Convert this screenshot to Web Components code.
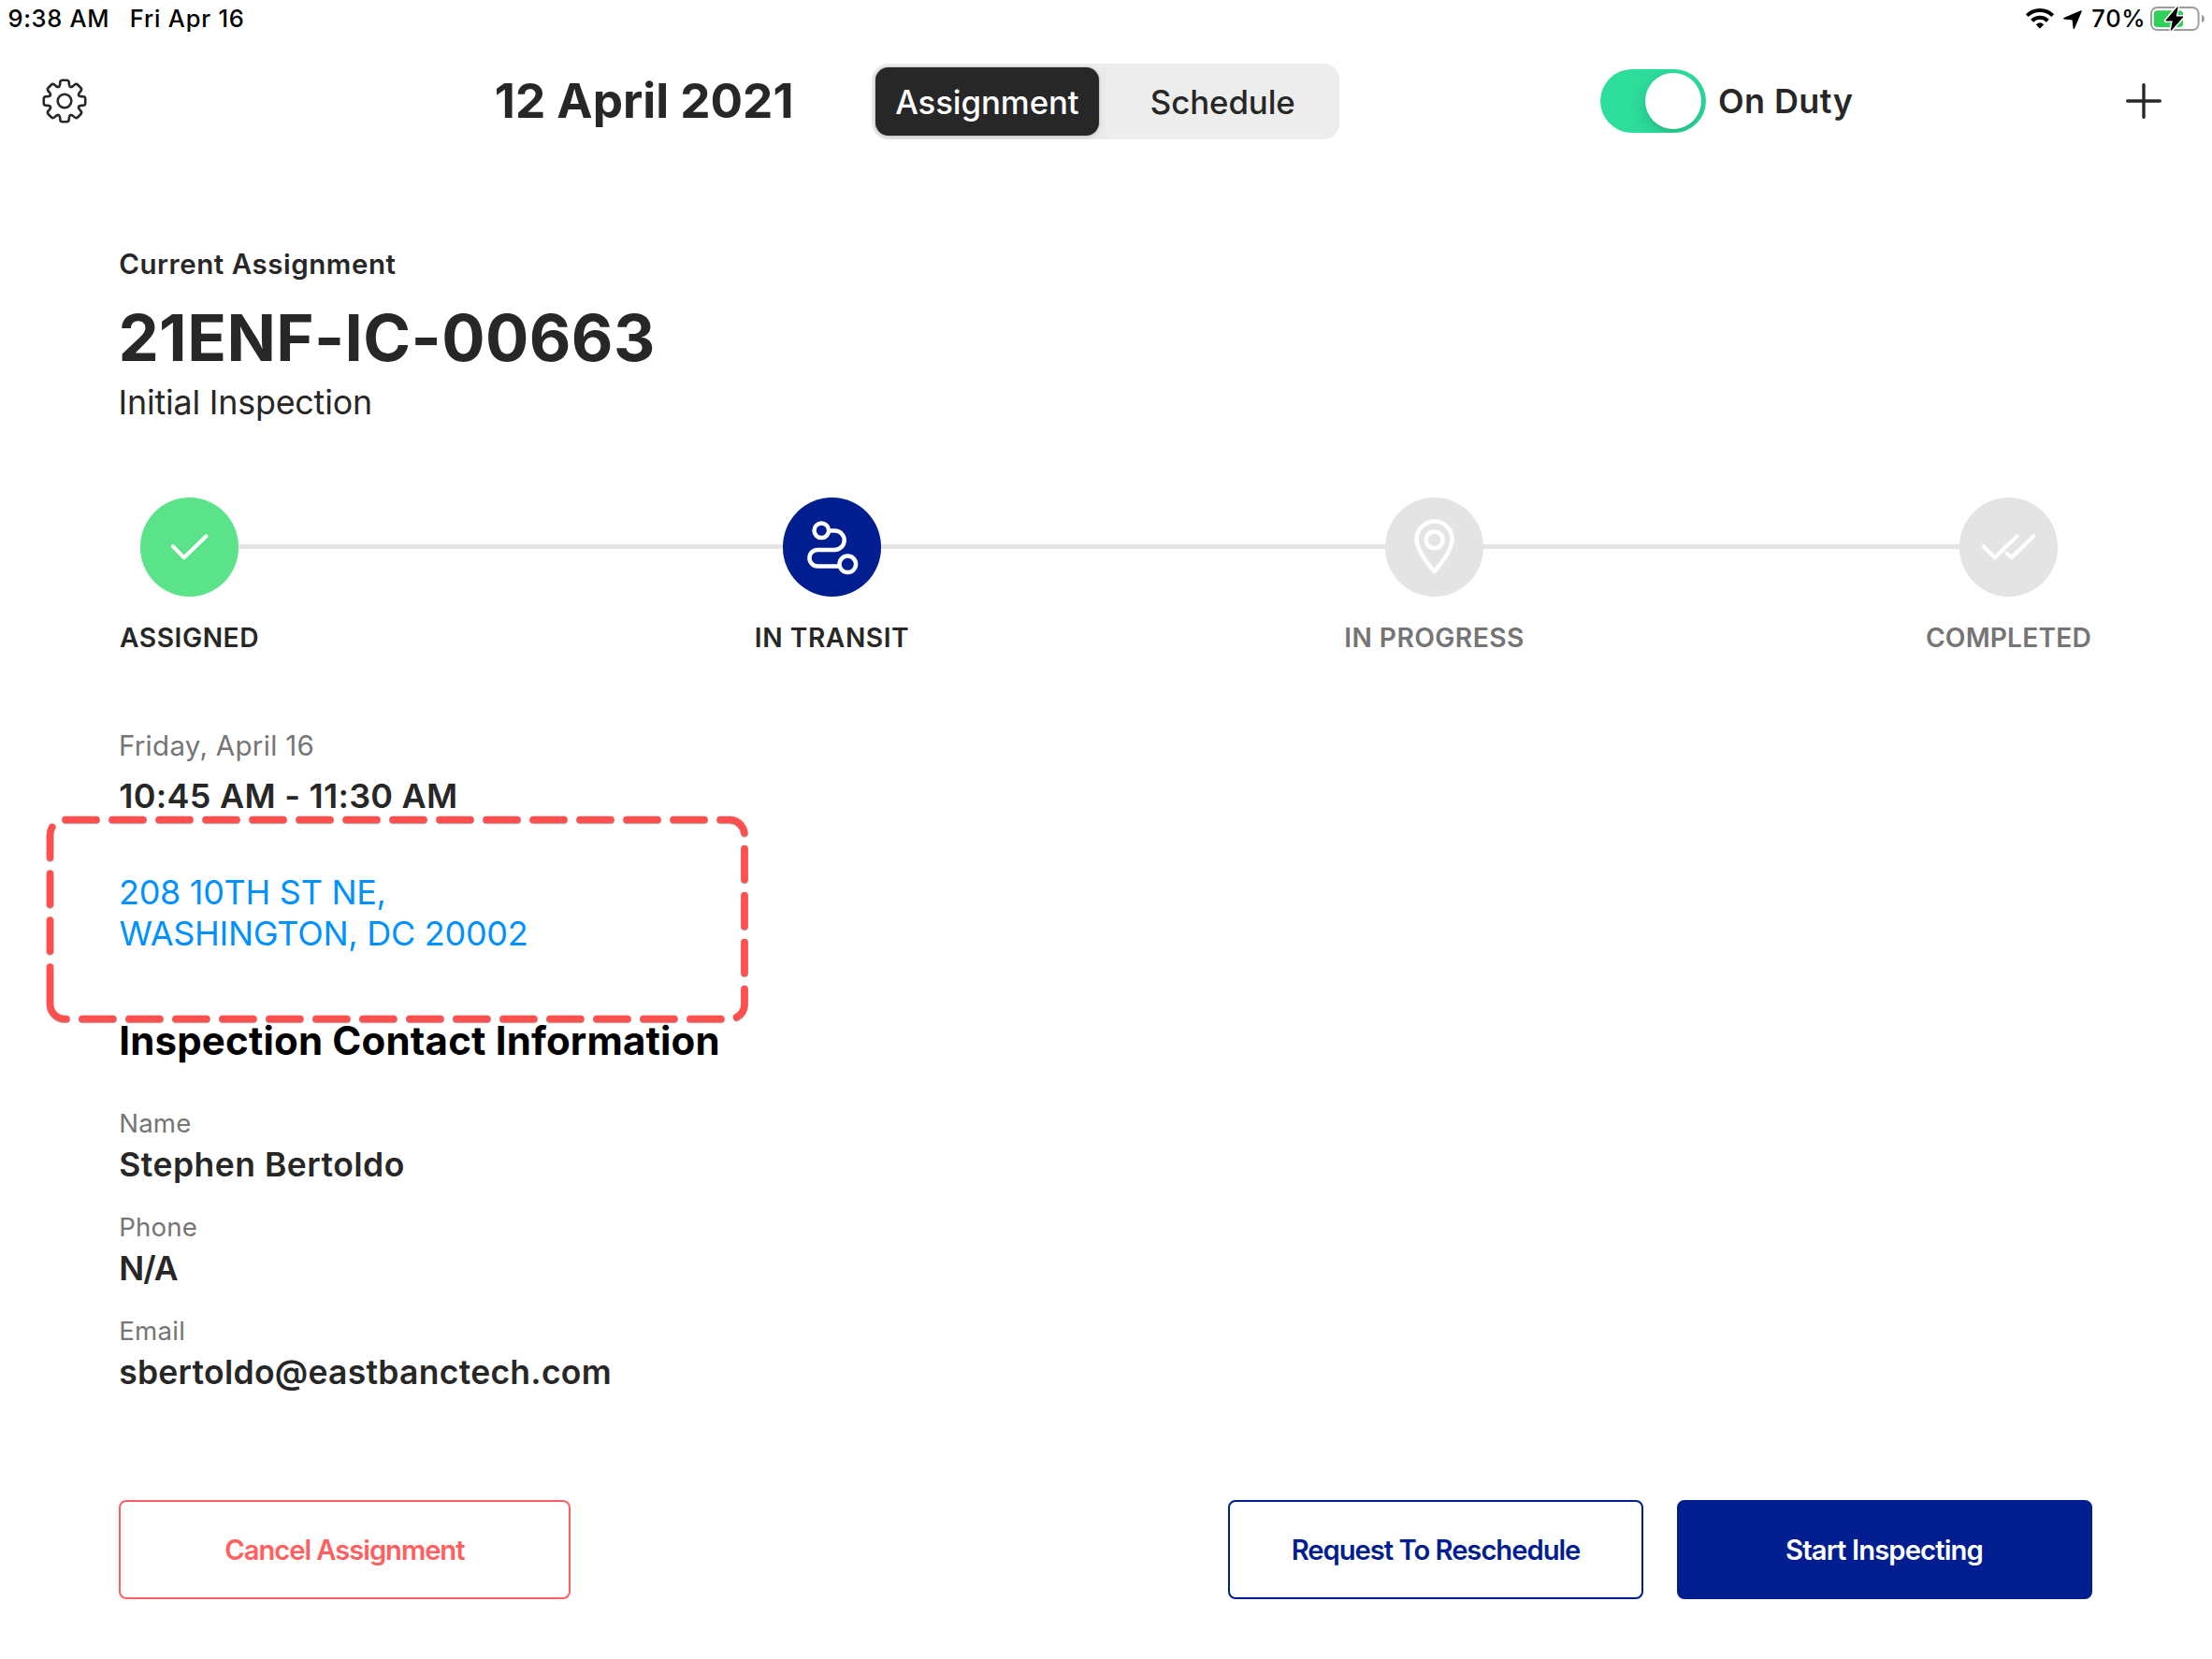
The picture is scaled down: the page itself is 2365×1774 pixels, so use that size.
<!DOCTYPE html>
<html lang="en">
<head>
<meta charset="utf-8">
<title>Current Assignment</title>
<style>
  html, body { margin: 0; padding: 0; background: #fff; }
  body { width: 2365px; height: 1774px; overflow: hidden; font-family: Inter, "Noto Sans", sans-serif; color: #272727; }
</style>
</head>
<body>
<inspector-app></inspector-app>
<script>
const define = (name, html, setup) => {
  const template = document.createElement('template');
  template.innerHTML = html;
  customElements.define(name, class extends HTMLElement {
    constructor() {
      super();
      this.attachShadow({ mode: 'open' }).appendChild(template.content.cloneNode(true));
    }
    connectedCallback() { if (setup) setup(this, this.shadowRoot); }
  });
};

/* One line of type: size, weight, line height and tracking come from attributes. */
define('type-line', `
  <style>:host { display: block; white-space: nowrap; }</style><slot></slot>`,
  el => {
    const [size, weight, line, tracking] = el.getAttribute('spec').split(' ');
    Object.assign(el.style, { fontSize: size + 'px', fontWeight: weight, lineHeight: line + 'px', letterSpacing: tracking + 'px' });
  });

define('status-bar', `
  <style>
    :host { display: flex; align-items: center; justify-content: space-between; height: 39px; padding: 0 8px 0 8.4px; color: #000; box-sizing: border-box; }
    .side { display: flex; align-items: center; }
    svg { display: block; overflow: visible; }
  </style>
  <div class="side">
    <type-line spec="25.5 500 39 0.7">9:38 AM</type-line>
    <type-line spec="25.5 500 39 0.8" style="margin-left:21.5px">Fri Apr 16</type-line>
  </div>
  <div class="side">
    <svg width="30" height="23" viewBox="0 0 30 23" style="margin-right:10px">
      <g fill="none" stroke="#000" stroke-width="4.1"><path d="M1.3 8.6A19.6 19.6 0 0 1 28.7 8.6"/><path d="M6.6 14.2A12 12 0 0 1 23.4 14.2"/></g>
      <path d="M10.9 18.3Q15 14.3 19.1 18.3L15.7 21.9Q15 22.6 14.3 21.9Z"/>
    </svg>
    <svg width="20" height="20" viewBox="0 0 20 20" style="margin:3px 10.4px 0 0"><path d="M19 .9L.9 8.7L10.3 9.7L11.3 19.1Z" stroke="#000" stroke-width="1.6" stroke-linejoin="round"/></svg>
    <type-line spec="25.5 500 39 0.7">70%</type-line>
    <svg width="58" height="26" viewBox="0 0 58 26" style="margin:1px 0 0 4.6px">
      <rect x="1" y="1" width="50.6" height="24" rx="6.6" fill="none" stroke="#9b9b9b" stroke-width="1.9"/>
      <path d="M55 8.7Q58 10.2 58 13.1T55 17.5Z" fill="#9b9b9b"/>
      <path d="M7.5 4.2H31Q35 4.2 35 8V18.2Q35 22 31 22H7.5Q3.8 22 3.8 18.2V8Q3.8 4.2 7.5 4.2Z" fill="#30d158"/>
      <path d="M29.2 .6L16.8 15H24.4L22.3 25.4L35 11H27.2Z" fill="#fff" stroke="#fff" stroke-width="4" stroke-linejoin="round"/>
      <path d="M29.2 .6L16.8 15H24.4L22.3 25.4L35 11H27.2Z" fill="#000" stroke="#000" stroke-width="1" stroke-linejoin="round"/>
    </svg>
  </div>`);

define('gear-icon', `
  <style>:host { display: block; } svg { display: block; overflow: visible; }</style>
  <svg width="48" height="50" viewBox="-24 -25 48 50" fill="none" stroke="#282828" stroke-width="2.6" stroke-linejoin="round"><path/><circle r="7.3"/></svg>`,
  (el, root) => {
    /* Eight teeth, each a trapezoid whose corners are rounded with quadratic curves. */
    const pts = [];
    for (let k = 0; k < 8; k++)
      for (const [r, a, c] of [[16.4, -18, 1.9], [22.7, -11.5, 2.4], [22.7, 11.5, 2.4], [16.4, 18, 1.9]]) {
        const t = (k * 45 + a) * Math.PI / 180;
        pts.push([r * Math.sin(t), -r * Math.cos(t), c]);
      }
    const toward = (p, q, d) => { const l = Math.hypot(q[0] - p[0], q[1] - p[1]); return [p[0] + (q[0] - p[0]) * d / l, p[1] + (q[1] - p[1]) * d / l].map(v => v.toFixed(2)).join(' '); };
    const n = pts.length;
    root.querySelector('path').setAttribute('d', pts.map((p, i) =>
      (i ? 'L' : 'M') + toward(p, pts[(i + n - 1) % n], p[2]) + 'Q' + p[0].toFixed(2) + ' ' + p[1].toFixed(2) + ' ' + toward(p, pts[(i + 1) % n], p[2])).join('') + 'Z');
  });

define('segmented-control', `
  <style>
    :host { display: flex; width: 500px; height: 81px; box-sizing: border-box; padding: 4.4px 3.6px; border-radius: 17px; background: #ededed; align-items: stretch; overflow: hidden; }
    .seg { display: flex; align-items: center; justify-content: center; }
    .on { width: 239.6px; border-radius: 14px; background: #272727; color: #fff; box-shadow: 0 3px 9px rgba(0,0,0,.1), 0 0 2px rgba(0,0,0,.35); }
    .off { flex: 1; color: #272727; padding-left: 5px; }
    .rule { width: 1px; margin: -4.4px 0 -4.4px 5px; background: #e6e6e6; }
  </style>
  <div class="seg on"><slot name="on"></slot></div><div class="rule"></div><div class="seg off"><slot name="off"></slot></div>`);

define('duty-toggle', `
  <style>
    :host { display: flex; align-items: center; }
    .track { display: flex; align-items: center; justify-content: flex-end; width: 112.8px; height: 68.6px; box-sizing: border-box; padding: 4.4px; border-radius: 34.3px; background: #2cdd9b; overflow: hidden; }
    .knob { width: 60px; height: 60px; border-radius: 50%; background: #fff; box-shadow: 0 6px 17px rgba(0,0,0,.15), 0 2px 3px rgba(0,0,0,.06); }
    ::slotted(*) { margin: 0 0 0 13.2px; }
  </style>
  <div class="track"><div class="knob"></div></div><slot></slot>`);

define('top-bar', `
  <style>
    :host { display: flex; align-items: center; height: 138px; box-sizing: border-box; padding: 0 54px 0 45.2px; }
    .title { margin: 0 0 1.6px 435.6px; width: 403.2px; }
    segmented-control { margin-top: 1px; }
    duty-toggle { margin-left: 279px; }
    .plus { display: block; margin-left: auto; }
  </style>
  <gear-icon></gear-icon>
  <type-line class="title" spec="51.3 650 60 0">12 April 2021</type-line>
  <segmented-control>
    <type-line slot="on" spec="34.8 550 44 -0.1">Assignment</type-line>
    <type-line slot="off" spec="34.8 540 44 -0.1">Schedule</type-line>
  </segmented-control>
  <duty-toggle><type-line spec="36 640 44 0.4">On Duty</type-line></duty-toggle>
  <svg class="plus" width="38" height="38" viewBox="-19 -19 38 38" stroke="#282828" stroke-width="3.4" stroke-linecap="round"><path d="M-17.3 0H17.3M0 -17.3V17.3"/></svg>`);

const STEP_ICONS = {
  check: '<path d="M34.9 52.2L46.7 64.3L70.6 41.3" stroke-width="4"/>',
  route: '<circle cx="41.3" cy="35.3" r="7.8"/><path d="M50 35.5H55.5A10.2 10.2 0 0 1 55.5 55.9H37.2A8.75 8.75 0 0 0 37.2 73.4H60"/><circle cx="69.3" cy="71.3" r="8.8"/>',
  pin: '<path d="M52.6 79.2C47 72.5 33.6 57.5 33.6 44.6A19 19 0 0 1 71.6 44.6C71.6 57.5 58.2 72.5 52.6 79.2Z"/><circle cx="52.6" cy="45.4" r="8.9"/>',
  double: '<path d="M25.9 52.2L37.7 64.3L61.6 41.3M50.6 59.5L55.6 64.3L79.4 41.3" stroke-width="4"/>'
};
define('progress-step', `
  <style>
    :host { display: flex; flex-direction: column; align-items: center; width: 105.2px; flex: none; color: #272727; }
    :host([tone="todo"]) { color: #757575; }
    .dot { position: relative; width: 105.2px; height: 105.2px; border-radius: 50%; background: #e4e4e4; margin-bottom: 27.8px; }
    :host([tone="done"]) .dot { background: #5ae389; }
    :host([tone="now"]) .dot { background: #001e90; }
    svg { display: block; }
  </style>
  <div class="dot"><svg width="105.2" height="105.2" viewBox="0 0 105.2 105.2" fill="none" stroke="#fff" stroke-width="4.5" stroke-linecap="round" stroke-linejoin="round"></svg></div>
  <slot></slot>`,
  (el, root) => { root.querySelector('svg').innerHTML = STEP_ICONS[el.getAttribute('icon')]; });

define('step-link', `<style>:host { display: block; height: 4.7px; margin: 50.1px -1px 0; background: #e4e4e4; }</style>`,
  el => { el.style.flex = el.getAttribute('span') + ' 0 0'; });

define('progress-track', `<style>:host { display: flex; align-items: flex-start; height: 166.2px; margin: 80.2px 165px 0 150px; }</style><slot></slot>`);

define('address-callout', `
  <style>
    :host { display: block; position: relative; margin: 60px 0 67.6px 127px; width: 680px; color: #0091ff; }
    svg { position: absolute; left: -127px; top: -72.9px; overflow: visible; filter: drop-shadow(.6px 1px .6px rgba(0,0,0,.3)); }
  </style>
  <slot></slot>
  <svg width="810" height="250" viewBox="0 860 810 250" fill="none" stroke="#ff4f4f" stroke-width="7.6" stroke-linecap="round">
    <path stroke-dasharray="33 17" d="M53.5 1067V892.5A16 16 0 0 1 69.5 876.5H780A16 16 0 0 1 796 892.5V1073.5A16 16 0 0 1 780 1089.5H69.5A16 16 0 0 1 53.5 1073.5V1067"/>
  </svg>`);

define('contact-field', `
  <style>:host { display: block; margin-left: 127.2px; height: 111px; } .label { color: #757575; margin-bottom: 6.2px; }</style>
  <div class="label"><slot name="label"></slot></div><slot></slot>`);

define('action-button', `
  <style>
    :host { display: flex; align-items: center; justify-content: center; height: 106px; width: 444px; box-sizing: border-box; border: 2px solid #001e90; border-radius: 8px; color: #001e90; background: #fff; }
    :host([kind="primary"]) { background: #001e90; color: #fff; }
    :host([kind="danger"]) { border-color: #ff5f5f; color: #ff5f5f; width: 483.4px; }
    ::slotted(*) { margin-top: 1px; }
  </style><slot></slot>`);

define('action-bar', `
  <style>:host { display: flex; margin: auto 128.5px 63.7px 126.7px; gap: 35.5px; } .push { flex: 1; }</style>
  <slot name="start"></slot><div class="push"></div><slot></slot>`);

define('inspector-app', `
  <style>:host { display: flex; flex-direction: column; width: 2365px; height: 1774px; background: #fff; } .muted { color: #757575; } .black { color: #000; }</style>
  <status-bar></status-bar>
  <top-bar></top-bar>
  <type-line spec="29.5 600 40 0.54" style="margin:85.2px 0 0 127.2px">Current Assignment</type-line>
  <type-line spec="68.8 700 80 0.4" style="margin:18.6px 0 0 126.4px">21ENF-IC-00663</type-line>
  <type-line spec="35.8 400 44 -0.18" style="margin:7.4px 0 0 126.6px">Initial Inspection</type-line>
  <progress-track>
    <progress-step tone="done" icon="check"><type-line spec="28.2 640 34 0.55">ASSIGNED</type-line></progress-step>
    <step-link span="584"></step-link>
    <progress-step tone="now" icon="route"><type-line spec="28.2 640 34 0.55">IN TRANSIT</type-line></progress-step>
    <step-link span="541"></step-link>
    <progress-step tone="todo" icon="pin"><type-line spec="28.2 600 34 0.42">IN PROGRESS</type-line></progress-step>
    <step-link span="511"></step-link>
    <progress-step tone="todo" icon="double"><type-line spec="28.2 600 34 0.15">COMPLETED</type-line></progress-step>
  </progress-track>
  <type-line class="muted" spec="29.5 400 36 0.3" style="margin:80.9px 0 0 126.9px">Friday, April 16</type-line>
  <type-line spec="36 600 44 0.25" style="margin:13.8px 0 0 127.3px">10:45 AM - 11:30 AM</type-line>
  <address-callout>
    <type-line spec="36 400 43.6 -0.3">208 10TH ST NE,</type-line>
    <type-line spec="36 400 43.6 -0.28" style="margin-left:.6px">WASHINGTON, DC 20002</type-line>
  </address-callout>
  <type-line class="black" spec="42 700 50 0.17" style="margin:0 0 45.9px 127.2px">Inspection Contact Information</type-line>
  <contact-field><type-line slot="label" spec="27.6 400 34 0.2">Name</type-line><type-line spec="35.5 600 44 0.49">Stephen Bertoldo</type-line></contact-field>
  <contact-field><type-line slot="label" spec="27.6 400 34 0.2">Phone</type-line><type-line spec="35.5 600 44 -1">N/A</type-line></contact-field>
  <contact-field><type-line slot="label" spec="27.6 400 34 0.3">Email</type-line><type-line spec="35.5 600 44 0.26">sbertoldo@eastbanctech.com</type-line></contact-field>
  <action-bar>
    <action-button slot="start" kind="danger"><type-line spec="29.2 580 40 -1.05">Cancel Assignment</type-line></action-button>
    <action-button><type-line spec="29.2 590 40 -1.02">Request To Reschedule</type-line></action-button>
    <action-button kind="primary"><type-line spec="29.2 580 40 -0.85">Start Inspecting</type-line></action-button>
  </action-bar>`);
</script>
</body>
</html>
